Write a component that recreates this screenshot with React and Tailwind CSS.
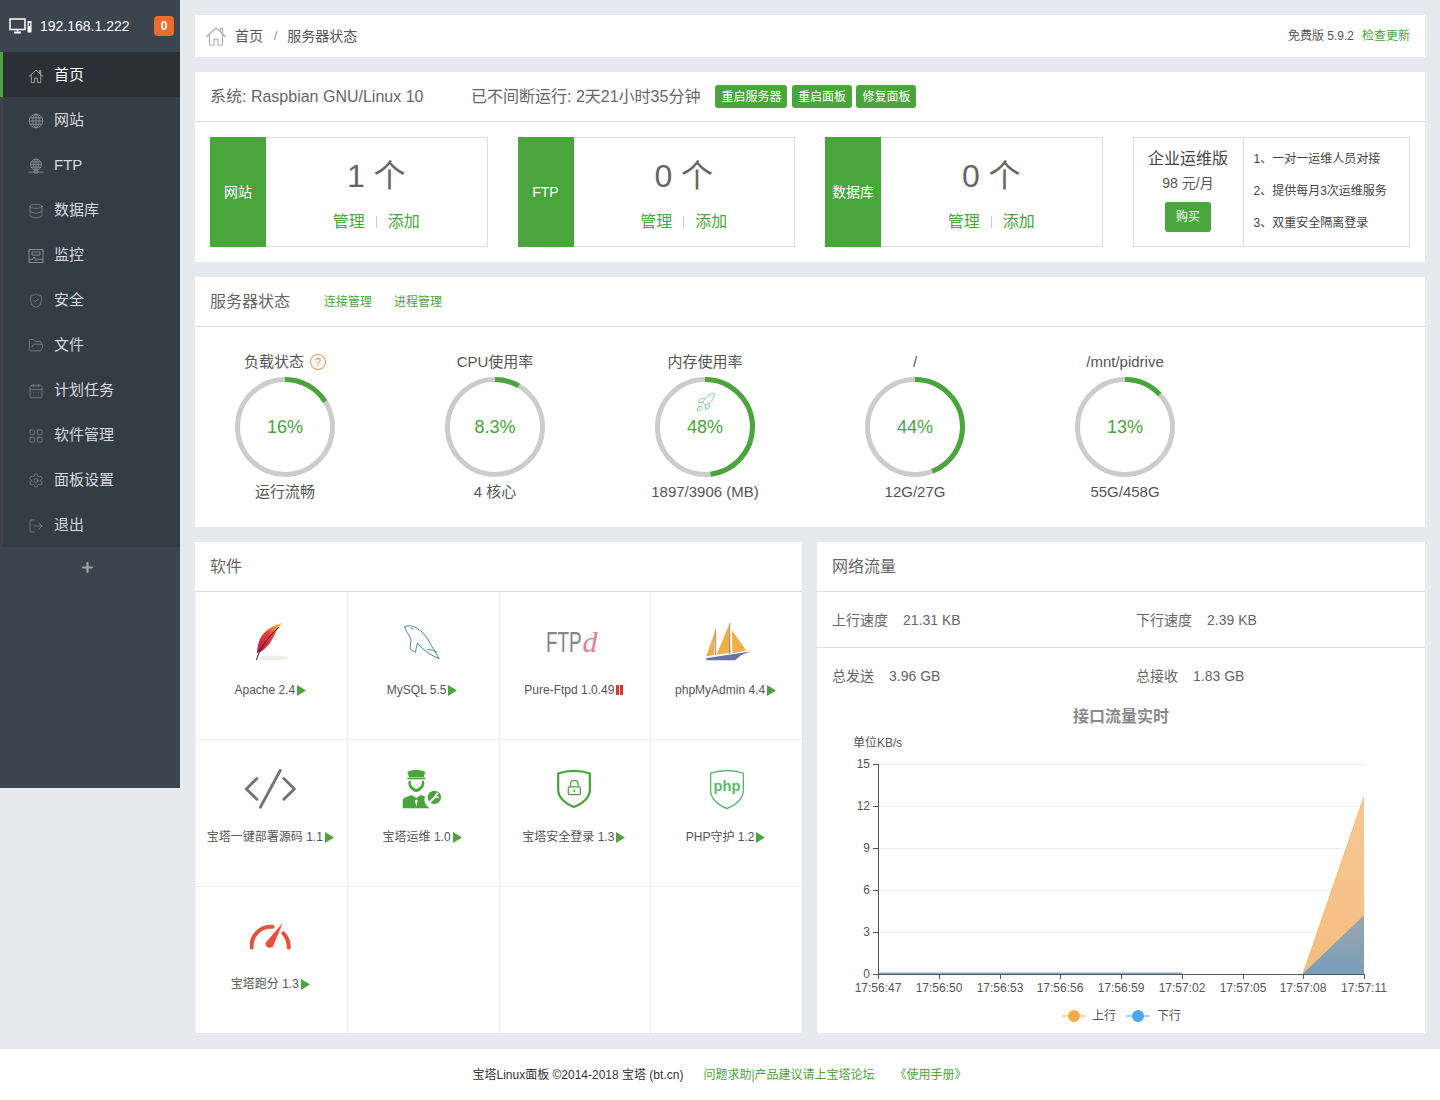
import React from "react";
import { Database, ShieldCheck, FolderOpen, CalendarDays, LayoutGrid, Settings, LogOut, Plus, Rocket } from "lucide-react";

const HomeIcon = ({ size = 16, color = "currentColor", sw = 1 }) => (
  <svg width={size} height={size} viewBox="0 0 22 22" fill="none" stroke={color} strokeWidth={sw} strokeLinejoin="round" strokeLinecap="round">
    <path d="M1.500 11.500 11 3l9.500 8.500M4.500 9.500V20h4.500v-6h4v6h4.500V9.500M15.500 6V3.500h2V8" />
  </svg>
);
const GlobeIcon = ({ size = 16 }) => (
  <svg width={size} height={size} viewBox="0 0 16 16" fill="none" stroke="currentColor" strokeWidth="0.9">
    <circle cx="8" cy="8" r="6.800" />
    <ellipse cx="8" cy="8" rx="3.200" ry="6.800" />
    <path d="M8 1.200v13.600M1.200 8h13.600M2.200 4.800h11.600M2.200 11.200h11.600" />
  </svg>
);
const FtpIcon = () => (
  <svg width="17" height="16" viewBox="0 0 17 16" fill="none" stroke="currentColor" strokeWidth="0.9">
    <circle cx="8.500" cy="6.500" r="5.800" />
    <ellipse cx="8.500" cy="6.500" rx="2.700" ry="5.800" />
    <path d="M8.500.7v11.600M2.700 6.500h11.600M3.500 3.800h10M3.500 9.200h10M.5 14.500h16M6.500 13h4v2.500h-4z" />
  </svg>
);
const MonitorIcon = () => (
  <svg width="16" height="16" viewBox="0 0 16 16" fill="none" stroke="currentColor" strokeWidth="0.9">
    <rect x="1" y="1.500" width="14" height="13" />
    <path d="M4 4h8v3H4zM1 11.500h3.500l1.500-2.500 2 3.500 1.500-2 1 1H15" />
  </svg>
);
const DeviceIcon = () => (
  <svg width="24" height="18" viewBox="0 0 24 18" fill="none" className="text-white">
    <rect x="1" y="2" width="15" height="10.500" stroke="currentColor" strokeWidth="1.500" />
    <path d="M5 15.500h7" stroke="currentColor" strokeWidth="2" />
    <path d="M8.500 12.500v2" stroke="currentColor" strokeWidth="1.500" />
    <rect x="18.500" y="4" width="4" height="11.500" rx="0.500" fill="currentColor" />
    <rect x="19.800" y="6" width="1.400" height="3" fill="#3c444d" />
  </svg>
);

const nav = [
  ["首页", <HomeIcon />],
  ["网站", <GlobeIcon />],
  ["FTP", <FtpIcon />],
  ["数据库", <Database size={16} strokeWidth={1} />],
  ["监控", <MonitorIcon />],
  ["安全", <ShieldCheck size={19} strokeWidth={1} />],
  ["文件", <FolderOpen size={17} strokeWidth={1} />],
  ["计划任务", <CalendarDays size={16} strokeWidth={1} />],
  ["软件管理", <LayoutGrid size={18} strokeWidth={1} />],
  ["面板设置", <Settings size={17} strokeWidth={1} />],
  ["退出", <LogOut size={16} strokeWidth={1} />],
];

function Sidebar() {
  return (
    <aside className="w-[180px] h-[788px] shrink-0 bg-[#3c444d] flex flex-col">
      <div className="h-[52px] flex items-center pl-[9px] pr-[6px]">
        <DeviceIcon />
        <span className="ml-[7px] text-[14px] text-white">192.168.1.222</span>
        <span className="ml-auto w-[20px] h-[20px] rounded-[4px] bg-[#f0692f] text-white text-[12px] font-bold flex items-center justify-center">0</span>
      </div>
      <nav className="bg-[#343c44]">
        {nav.map(([label, icon], i) => (
          <div
            key={label}
            className={
              i === 0
                ? "h-[45px] pt-[2px] flex items-center border-l-[3px] border-[#4aa53c] bg-[#2b3037] pl-[25px] text-white text-[15px]"
                : "h-[45px] pt-[2px] flex items-center border-l-[3px] border-[#3f4347] pl-[25px] text-[#d8dadc] text-[15px]"
            }
          >
            <span className={i === 0 ? "w-[16px] flex justify-center text-[#c8cacc]" : "w-[16px] flex justify-center text-[#8d9399]"}>{icon}</span>
            <span className="ml-[10px]">{label}</span>
          </div>
        ))}
      </nav>
      <div className="h-[41px] pr-[5px] flex items-center justify-center text-[#a0a4a9]">
        <Plus size={15} strokeWidth={3.500} />
      </div>
    </aside>
  );
}

function Tile({ name, count }) {
  return (
    <div className="flex h-[110px]">
      <div className="w-[56px] shrink-0 bg-[#4aa53c] flex items-center justify-center text-white text-[14px]">{name}</div>
      <div className="flex-1 flex flex-col items-center pt-[18px] border border-l-0 border-[#ddd]">
        <div className="h-[40px] leading-[40px] text-[32px] text-[#666]">{count} 个</div>
        <div className="mt-[14px] h-[24px] flex items-center text-[16px] text-[#4aa53c]">
          <span>管理</span>
          <span className="mx-[11px] w-px h-[12px] bg-[#ccc]" />
          <span>添加</span>
        </div>
      </div>
    </div>
  );
}

function Gauge({ title, value, pct, sub, help, rocket }) {
  const r = 47.5;
  const c = 2 * Math.PI * r;
  return (
    <div className="w-[180px] flex flex-col items-center">
      <div className="h-[20px] flex items-center text-[15px] text-[#555]">
        {title}
        {help && <span className="ml-[6px] w-[16px] h-[16px] rounded-full border border-[#e58a46] text-[#e58a46] text-[11px] flex items-center justify-center">?</span>}
      </div>
      <div className="relative mt-[5px] w-[100px] h-[100px]">
        <svg width="100" height="100" viewBox="0 0 100 100" fill="none">
          <circle cx="50" cy="50" r={r} stroke="#cccccc" strokeWidth="5" />
          <circle cx="50" cy="50" r={r} stroke="#4aa53c" strokeWidth="5" strokeDasharray={`${(c * pct) / 100} ${c}`} transform="rotate(-90 50 50)" />
        </svg>
        <div className="absolute inset-0 flex items-center justify-center text-[18px] text-[#4aa53c]">{value}</div>
        {rocket && (
          <div className="absolute top-[15px] left-0 right-0 flex justify-center text-[#7cc28a]">
            <Rocket size={21} strokeWidth={1} />
          </div>
        )}
      </div>
      <div className="mt-[5px] h-[20px] leading-[20px] text-[15px] text-[#555]">{sub}</div>
    </div>
  );
}

const Tri = () => (
  <svg width="9" height="11" viewBox="0 0 9 11" className="ml-[2px] inline-block shrink-0"><path d="M0 0l9 5.500L0 11z" fill="#4aa53c" /></svg>
);
const Pause = () => (
  <span className="ml-[2px] flex gap-[1px] shrink-0"><span className="w-[3px] h-[10px] bg-[#d8352f]" /><span className="w-[3px] h-[10px] bg-[#d8352f]" /></span>
);

const Feather = () => (
  <svg width="48" height="48" viewBox="0 0 48 48" fill="none">
    <defs>
      <linearGradient id="fg" x1="9" y1="42" x2="38" y2="5" gradientUnits="userSpaceOnUse">
        <stop offset="0" stopColor="#6b2a7c" />
        <stop offset="0.3" stopColor="#c5203f" />
        <stop offset="0.65" stopColor="#e8483a" />
        <stop offset="0.85" stopColor="#f2a13a" />
        <stop offset="1" stopColor="#f4d35a" />
      </linearGradient>
    </defs>
    <ellipse cx="27" cy="40" rx="15" ry="2.500" fill="#ececE8" />
    <path d="M36 5C28 7 18 12 14 21c-2 5-3 10-3 14 5-1 9-5 13-10 4-6 7-14 12-20z" fill="url(#fg)" />
    <path d="M10.500 42C13 32 21 20 33 9" stroke="#3a1a30" strokeWidth="1" />
  </svg>
);
const Dolphin = () => (
  <svg width="44" height="40" viewBox="620 95 130 120" fill="none" stroke="#3f7d98" strokeWidth="2.800" strokeLinecap="round" strokeLinejoin="round">
    <path d="M633 110C645 100 668 110 685 125 703 140 710 165 722 180 728 190 732 198 736 205" />
    <path d="M633 110C636 125 650 135 652 150 652 160 648 172 650 178 655 178 660 182 666 186 666 175 670 165 672 158 680 172 695 180 706 190 716 196 726 200 736 205" />
    <path d="M702 178C712 176 720 182 730 185M652 113l7 3" />
  </svg>
);
const Ftpd = () => (
  <div className="w-[55px] h-[30px] flex items-end">
    <span className="w-[36px] shrink-0 origin-left scale-x-[0.63] text-[30px] leading-[30px] text-[#858585] whitespace-nowrap">FTP</span>
    <span className="w-[19px] shrink-0 text-[30px] leading-[30px] italic text-[#e08088] font-['Liberation_Serif',serif]">d</span>
  </div>
);
const Boat = () => (
  <svg width="46" height="40" viewBox="618 100 134 114" className="ml-[5px]">
    <path d="M648 124l-3 70-24 5z" fill="#f0ae45" />
    <path d="M688 106l4 82-40 6z" fill="#f0ae45" />
    <path d="M696 122l42 60-40 8z" fill="#f0ae45" />
    <path d="M649 120v76M690 102v90" stroke="#808080" strokeWidth="2.500" />
    <path d="M620 204l130-19-26 10-18 15h-82z" fill="#6a72a8" />
  </svg>
);
const Code = () => (
  <svg width="52" height="42" viewBox="150 537 158 120" fill="none" stroke="#757575" strokeWidth="9" strokeLinecap="round" strokeLinejoin="round">
    <path d="M189 565l-32 32 32 31M271 565l32 32-32 31M260 541l-60 111" />
  </svg>
);
const Ops = () => (
  <svg width="40" height="40" viewBox="628 537 120 120" fill="#4aa53c">
    <path d="M644 546c14-8 38-8 54 0l-5 16h-44z" />
    <path d="M644 563h54v5h-54z" />
    <path d="M648 572c-2 8-1 17 6 24 6 6 12 10 17 10s11-4 17-10c7-7 8-16 6-24h-6c0 8-2 14-6 18-4 3-8 7-11 7s-7-4-11-7c-5-4-6-10-6-18z" />
    <path d="M630 655v-22c0-6 5-10 12-12l15-6 14 9 14-9 13 5c-6 8-3 24 14 35zM671 628l-4 4 4 18 4-18z" />
    <circle cx="725" cy="622" r="20" />
    <path d="M713 635l17-17" stroke="#fff" strokeWidth="6" strokeLinecap="round" fill="none" />
    <path d="M730 618a7 7 0 0 1 7-8" stroke="#fff" strokeWidth="5" fill="none" />
    <path d="M730 618a7 7 0 0 0 8 4" stroke="#fff" strokeWidth="5" fill="none" />
  </svg>
);
const Lock = () => (
  <svg width="38" height="42" viewBox="165 532 120 128" fill="none" stroke="#47a53b" strokeLinejoin="round">
    <path d="M225 539c18 0 36 3 50 8v52c0 24-24 44-50 54-26-10-50-30-50-54v-52c14-5 32-8 50-8z" strokeWidth="7" />
    <rect x="207" y="589" width="38" height="25" rx="4" strokeWidth="4" />
    <path d="M214 589v-8c0-16 24-16 24 0v8" strokeWidth="4" />
    <path d="M226 598v8" strokeWidth="5" />
  </svg>
);
const PhpShield = () => (
  <svg width="38" height="43" viewBox="625 532 114 128" fill="none" className="ml-[3px]">
    <path d="M682 539c18 0 34 3 49 8v52c0 24-22 44-49 54-27-10-49-30-49-54v-52c15-5 31-8 49-8z" stroke="#5cb868" strokeWidth="4" strokeLinejoin="round" />
    <text x="682" y="601" textAnchor="middle" fontSize="44" fontWeight="700" fill="#5cb868">php</text>
  </svg>
);
const Speed = () => (
  <svg width="41" height="28" viewBox="170 97 124 84" fill="none">
    <path d="M175 174A58 58 0 0 1 238 111M271 131A58 58 0 0 1 287 174" stroke="#e8503a" strokeWidth="12" strokeLinecap="round" />
    <path d="M269 99 241 168c-4 10-24 8-24-5 0-3 2-6 5-9z" fill="#e8503a" />
  </svg>
);

const software = [
  ["Apache 2.4", <Feather />, "run"],
  ["MySQL 5.5", <Dolphin />, "run"],
  ["Pure-Ftpd 1.0.49", <Ftpd />, "stop"],
  ["phpMyAdmin 4.4", <Boat />, "run"],
  ["宝塔一键部署源码 1.1", <Code />, "run"],
  ["宝塔运维 1.0", <Ops />, "run"],
  ["宝塔安全登录 1.3", <Lock />, "run"],
  ["PHP守护 1.2", <PhpShield />, "run"],
  ["宝塔跑分 1.3", <Speed />, "run"],
  null,
  null,
  null,
];

function Chart() {
  const xs = [878, 939, 1000, 1060, 1121, 1182, 1243, 1303, 1364];
  const labels = ["17:56:47", "17:56:50", "17:56:53", "17:56:56", "17:56:59", "17:57:02", "17:57:05", "17:57:08", "17:57:11"];
  const ys = [[974, "0"], [932, "3"], [890, "6"], [848, "9"], [806, "12"], [764, "15"]];
  return (
    <svg width="608" height="329" viewBox="817 704 608 329" className="block">
      <defs>
        <linearGradient id="up" x1="0" y1="797" x2="0" y2="974" gradientUnits="userSpaceOnUse">
          <stop offset="0" stopColor="#f7c893" />
          <stop offset="1" stopColor="#f5bd7e" />
        </linearGradient>
        <linearGradient id="down" x1="0" y1="916" x2="0" y2="974" gradientUnits="userSpaceOnUse">
          <stop offset="0" stopColor="#9aa7ac" />
          <stop offset="1" stopColor="#7a9db9" />
        </linearGradient>
      </defs>
      <text x="1121" y="722" textAnchor="middle" fontSize="16" fontWeight="700" fill="#8a8a8a">接口流量实时</text>
      <text x="853" y="747" fontSize="12" fill="#555">单位KB/s</text>
      {ys.map(([y, t]) => (
        <g key={t}>
          {y !== 974 && <line x1="878" x2="1364" y1={y + 0.5} y2={y + 0.5} stroke="#eeeeee" />}
          <line x1="873" x2="878" y1={y + 0.5} y2={y + 0.5} stroke="#555" />
          <text x="870" y={y + 4} textAnchor="end" fontSize="12" fill="#555">{t}</text>
        </g>
      ))}
      <path d="M1303 974L1364 797V974Z" fill="url(#up)" />
      <path d="M1303 974L1364 797" stroke="#f3b66f" fill="none" />
      <path d="M1303 974L1364 916V974Z" fill="url(#down)" />
      <path d="M1303 974L1364 916" stroke="#7fa3c4" fill="none" />
      <path d="M878 973.500H1182" stroke="#8fa5b5" strokeWidth="2" />
      <line x1="878.500" x2="878.500" y1="764" y2="974" stroke="#555" />
      <line x1="878" x2="1364" y1="974.500" y2="974.500" stroke="#555" />
      {xs.map((x, i) => (
        <g key={x}>
          <line x1={x + 0.5} x2={x + 0.5} y1="974" y2="979" stroke="#555" />
          <text x={x} y="992" textAnchor="middle" fontSize="12" fill="#555">{labels[i]}</text>
        </g>
      ))}
      <line x1="1062" x2="1086" y1="1016" y2="1016" stroke="#f5ae4b" />
      <circle cx="1074" cy="1016" r="6" fill="#f5ae4b" />
      <text x="1092" y="1020" fontSize="12" fill="#555">上行</text>
      <line x1="1126" x2="1150" y1="1016" y2="1016" stroke="#52a5f5" />
      <circle cx="1138" cy="1016" r="6" fill="#52a5f5" />
      <text x="1157" y="1020" fontSize="12" fill="#555">下行</text>
    </svg>
  );
}

export default function App() {
  return (
    <div className="w-[1440px] min-h-[1100px] bg-[#e6eaef] font-['Liberation_Sans','Noto_Sans_CJK_SC',sans-serif] flex flex-col">
      <div className="flex items-start h-[1049px]">
        <Sidebar />
        <main className="w-[1260px] p-[15px] flex flex-col gap-[15px]">
          <div className="h-[42px] bg-white flex items-center pl-[10px] pr-[15px] text-[#555]">
            <HomeIcon size={22} color="#b0b0b0" sw={1.200} />
            <span className="ml-[8px] text-[14px]">首页</span>
            <span className="ml-[11px] mr-[10px] text-[12px] text-[#888]">/</span>
            <span className="text-[14px]">服务器状态</span>
            <span className="ml-auto text-[12px]">免费版 5.9.2</span>
            <span className="ml-[8px] text-[12px] text-[#4aa53c]">检查更新</span>
          </div>

          <section className="bg-white h-[190px]">
            <div className="h-[50px] border-b border-[#ddd] flex items-center px-[15px] text-[16px] text-[#666]">
              <span className="w-[261px]">系统: Raspbian GNU/Linux 10</span>
              <span>已不间断运行: 2天21小时35分钟</span>
              <span className="ml-[15px] flex gap-[4.5px]">
                {["重启服务器", "重启面板", "修复面板"].map((t) => (
                  <span key={t} className="h-[23px] px-[6px] rounded-[3px] bg-[#4aa53c] text-white text-[12px] flex items-center">{t}</span>
                ))}
              </span>
            </div>
            <div className="grid grid-cols-4 gap-[30px] p-[15px]">
              <Tile name="网站" count="1" />
              <Tile name="FTP" count="0" />
              <Tile name="数据库" count="0" />
              <div className="flex h-[110px] border border-[#ddd]">
                <div className="w-[110px] border-r border-[#ddd] flex flex-col items-center pt-[9px]">
                  <div className="h-[24px] leading-[24px] text-[16px] text-[#444]">企业运维版</div>
                  <div className="mt-[2px] h-[20px] leading-[20px] text-[14px] text-[#555]">98 元/月</div>
                  <div className="mt-[9px] w-[46px] h-[30px] rounded-[3px] bg-[#4aa53c] text-white text-[12px] flex items-center justify-center">购买</div>
                </div>
                <div className="flex-1 pl-[10px] pt-[5px] text-[12px] text-[#444]">
                  <div className="h-[32px] leading-[32px]">1、一对一运维人员对接</div>
                  <div className="h-[32px] leading-[32px]">2、提供每月3次运维服务</div>
                  <div className="h-[32px] leading-[32px]">3、双重安全隔离登录</div>
                </div>
              </div>
            </div>
          </section>

          <section className="bg-white h-[250px]">
            <div className="h-[50px] border-b border-[#ddd] flex items-center px-[15px]">
              <span className="text-[16px] text-[#666]">服务器状态</span>
              <span className="ml-[34px] text-[12px] text-[#4aa53c]">连接管理</span>
              <span className="ml-[22px] text-[12px] text-[#4aa53c]">进程管理</span>
            </div>
            <div className="flex gap-[30px] pt-[25px]">
              <Gauge title="负载状态" value="16%" pct={16} sub="运行流畅" help />
              <Gauge title="CPU使用率" value="8.3%" pct={8.3} sub="4 核心" />
              <Gauge title="内存使用率" value="48%" pct={48} sub="1897/3906 (MB)" rocket />
              <Gauge title="/" value="44%" pct={44} sub="12G/27G" />
              <Gauge title="/mnt/pidrive" value="13%" pct={13} sub="55G/458G" />
            </div>
          </section>

          <div className="grid grid-cols-[607px_608px] gap-[15px] h-[491px]">
            <section className="bg-white">
              <div className="h-[50px] border-b border-[#ddd] flex items-center px-[15px] text-[16px] text-[#666]">软件</div>
              <div className="grid grid-cols-4 grid-rows-[148px_147px_146px] h-[441px]">
                {software.map((s, i) => (
                  <div
                    key={i}
                    className={
                      "flex flex-col items-center border-l border-[#eceef4] pr-[2px] " +
                      (i < 8 ? "border-b " : "") +
                      (i < 4 ? "pt-[26px]" : "pt-[25px]")
                    }
                  >
                    {s && (
                      <>
                        <div className="h-[48px] flex items-center justify-center">{s[1]}</div>
                        <div className="mt-[16px] h-[16px] flex items-center text-[12px] text-[#555] whitespace-nowrap">
                          {s[0]}
                          {s[2] === "run" ? <Tri /> : <Pause />}
                        </div>
                      </>
                    )}
                  </div>
                ))}
              </div>
            </section>

            <section className="bg-white">
              <div className="h-[50px] border-b border-[#ddd] flex items-center px-[15px] text-[16px] text-[#666]">网络流量</div>
              <div className="h-[56px] pt-[2px] border-b border-[#ddd] flex items-center px-[15px] text-[14px] text-[#666]">
                <span className="w-[304px]">上行速度<span className="ml-[15px]">21.31 KB</span></span>
                <span>下行速度<span className="ml-[15px]">2.39 KB</span></span>
              </div>
              <div className="h-[56px] flex items-center px-[15px] text-[14px] text-[#666]">
                <span className="w-[304px]">总发送<span className="ml-[15px]">3.96 GB</span></span>
                <span>总接收<span className="ml-[15px]">1.83 GB</span></span>
              </div>
              <Chart />
            </section>
          </div>
        </main>
      </div>
      <footer className="h-[51px] pt-px pr-px bg-white flex items-center justify-center text-[12px] text-[#333]">
        <span>宝塔Linux面板 ©2014-2018 宝塔 (bt.cn)</span>
        <span className="ml-[20px] text-[#4aa53c]">问题求助|产品建议请上宝塔论坛</span>
        <span className="ml-[20px] text-[#4aa53c]">《使用手册》</span>
      </footer>
    </div>
  );
}
